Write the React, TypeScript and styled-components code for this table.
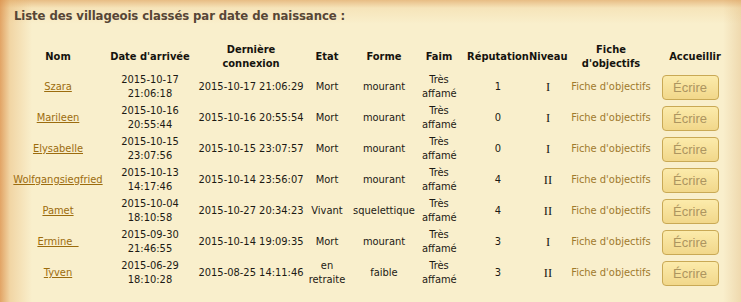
import styled, { createGlobalStyle } from "styled-components";

const GlobalStyle = createGlobalStyle`
  html, body {
    margin: 0;
    padding: 0;
  }
  body {
    width: 741px;
    height: 302px;
    overflow: hidden;
    font-family: "DejaVu Sans Condensed", "DejaVu Sans", sans-serif;
  }
`;

const Page = styled.div`
  width: 741px;
  height: 302px;
  box-sizing: border-box;
  padding: 8px 0 0 10px;
  background:
    linear-gradient(to right, rgba(220, 145, 75, 0.8) 0px, rgba(230, 175, 105, 0.4) 10px, rgba(240, 210, 150, 0) 32px),
    linear-gradient(to bottom, rgba(220, 155, 85, 0.6) 0px, rgba(235, 190, 120, 0.22) 8px, rgba(240, 210, 150, 0) 24px),
    linear-gradient(to left, rgba(228, 195, 145, 0.5) 0px, rgba(240, 220, 170, 0) 18px),
    #f9efcc;
`;

const Title = styled.h2`
  margin: 0 0 19px 4px;
  font-size: 13px;
  font-weight: bold;
  color: #574636;
  letter-spacing: -0.1px;
`;

const Table = styled.table`
  table-layout: fixed;
  border-collapse: collapse;
  width: 725px;
  font-size: 11px;
  color: #1c1a14;
`;

const Head = styled.th<{ $padRight?: number }>`
  padding: 1px ${(p) => p.$padRight ?? 0}px 1px 0;
  height: 28px;
  line-height: 14px;
  font-weight: bold;
  text-align: center;
  vertical-align: middle;
  color: #15130e;
`;

const Cell = styled.td<{ $padRight?: number }>`
  padding: 1px ${(p) => p.$padRight ?? 0}px 2px 0;
  height: 28px;
  line-height: 14px;
  text-align: center;
  vertical-align: middle;
  white-space: normal;
`;

const NameLink = styled.a`
  color: #9c6c0e;
  text-decoration: underline;
  white-space: pre;
`;

const Roman = styled.span`
  font-family: "Liberation Serif", serif;
  font-size: 12.5px;
`;

const SheetLink = styled.a`
  color: #a07a2c;
  text-decoration: none;
  white-space: nowrap;
`;

const WriteButton = styled.button`
  width: 57px;
  height: 25px;
  margin-right: 10px;
  border: 1px solid #c9a955;
  border-radius: 4px;
  background: linear-gradient(to bottom, #fcebab, #f1d78a);
  color: #ad9560;
  font-family: "Liberation Sans", sans-serif;
  font-size: 13px;
  padding: 0;
  cursor: pointer;
`;

type Villager = {
  name: string;
  arrival: [string, string];
  last: string;
  state: string;
  form: string;
  reputation: number;
  level: string;
};

const villagers: Villager[] = [
  { name: "Szara", arrival: ["2015-10-17", "21:06:18"], last: "2015-10-17 21:06:29", state: "Mort", form: "mourant", reputation: 1, level: "I" },
  { name: "Marileen", arrival: ["2015-10-16", "20:55:44"], last: "2015-10-16 20:55:54", state: "Mort", form: "mourant", reputation: 0, level: "I" },
  { name: "Elysabelle", arrival: ["2015-10-15", "23:07:56"], last: "2015-10-15 23:07:57", state: "Mort", form: "mourant", reputation: 0, level: "I" },
  { name: "Wolfgangsiegfried", arrival: ["2015-10-13", "14:17:46"], last: "2015-10-14 23:56:07", state: "Mort", form: "mourant", reputation: 4, level: "II" },
  { name: "Pamet", arrival: ["2015-10-04", "18:10:58"], last: "2015-10-27 20:34:23", state: "Vivant", form: "squelettique", reputation: 4, level: "II" },
  { name: "Ermine  ", arrival: ["2015-09-30", "21:46:55"], last: "2015-10-14 19:09:35", state: "Mort", form: "mourant", reputation: 3, level: "I" },
  { name: "Tyven", arrival: ["2015-06-29", "18:10:28"], last: "2015-08-25 14:11:46", state: "en retraite", form: "faible", reputation: 3, level: "II" },
];

const widths = [96, 88, 114, 38, 76, 45, 62, 38, 88, 80];

export default function App() {
  return (
    <>
      <GlobalStyle />
      <Page>
        <Title>Liste des villageois classés par date de naissance :</Title>
        <Table>
          <colgroup>
            {widths.map((w, i) => (
              <col key={i} style={{ width: w }} />
            ))}
          </colgroup>
          <thead>
            <tr>
              <Head>Nom</Head>
              <Head>Date d'arrivée</Head>
              <Head>
                Dernière
                <br />
                connexion
              </Head>
              <Head>Etat</Head>
              <Head>Forme</Head>
              <Head $padRight={11}>Faim</Head>
              <Head>Réputation</Head>
              <Head>Niveau</Head>
              <Head>
                Fiche
                <br />
                d'objectifs
              </Head>
              <Head>Accueillir</Head>
            </tr>
          </thead>
          <tbody>
            {villagers.map((v) => (
              <tr key={v.name}>
                <Cell>
                  <NameLink href="#">{v.name}</NameLink>
                </Cell>
                <Cell>
                  {v.arrival[0]}
                  <br />
                  {v.arrival[1]}
                </Cell>
                <Cell>{v.last}</Cell>
                <Cell>{v.state}</Cell>
                <Cell>{v.form}</Cell>
                <Cell $padRight={11}>Très affamé</Cell>
                <Cell>{v.reputation}</Cell>
                <Cell>
                  <Roman>{v.level}</Roman>
                </Cell>
                <Cell>
                  <SheetLink href="#">Fiche d'objectifs</SheetLink>
                </Cell>
                <Cell>
                  <WriteButton>Écrire</WriteButton>
                </Cell>
              </tr>
            ))}
          </tbody>
        </Table>
      </Page>
    </>
  );
}
